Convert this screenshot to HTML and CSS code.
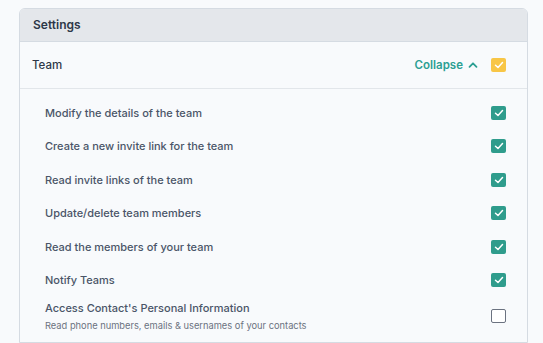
FILE: index.html
```html
<!DOCTYPE html>
<html lang="en">
<head>
    <meta charset="UTF-8">
    <meta name="viewport" content="width=device-width, initial-scale=1.0">
    <title>Settings</title>
    <link rel="stylesheet" href="styles.css">
</head>
<body>
    <div class="card">
        <div class="card-header">Settings</div>

        <div class="section-row">
            <span class="section-title">Team</span>
            <div class="section-actions">
                <span class="collapse">Collapse
                    <svg width="10" height="10" viewBox="0 0 10 10"><path d="M1.5 6.8 L5 3.3 L8.5 6.8" fill="none" stroke="currentColor" stroke-width="1.8" stroke-linecap="round" stroke-linejoin="round"/></svg>
                </span>
                <span class="check check-yellow">
                    <svg viewBox="0 0 14 14"><path d="M3.5 7.2 L6 9.5 L10.5 4.6" fill="none" stroke="#fff" stroke-width="1.5" stroke-linecap="round" stroke-linejoin="round"/></svg>
                </span>
            </div>
        </div>

        <ul class="perm-list">
            <li class="perm">
                <span class="perm-title">Modify the details of the team</span>
                <span class="check check-teal"><svg viewBox="0 0 14 14"><path d="M3.5 7.2 L6 9.5 L10.5 4.6" fill="none" stroke="#fff" stroke-width="1.5" stroke-linecap="round" stroke-linejoin="round"/></svg></span>
            </li>
            <li class="perm">
                <span class="perm-title">Create a new invite link for the team</span>
                <span class="check check-teal"><svg viewBox="0 0 14 14"><path d="M3.5 7.2 L6 9.5 L10.5 4.6" fill="none" stroke="#fff" stroke-width="1.5" stroke-linecap="round" stroke-linejoin="round"/></svg></span>
            </li>
            <li class="perm">
                <span class="perm-title">Read invite links of the team</span>
                <span class="check check-teal"><svg viewBox="0 0 14 14"><path d="M3.5 7.2 L6 9.5 L10.5 4.6" fill="none" stroke="#fff" stroke-width="1.5" stroke-linecap="round" stroke-linejoin="round"/></svg></span>
            </li>
            <li class="perm">
                <span class="perm-title">Update/delete team members</span>
                <span class="check check-teal"><svg viewBox="0 0 14 14"><path d="M3.5 7.2 L6 9.5 L10.5 4.6" fill="none" stroke="#fff" stroke-width="1.5" stroke-linecap="round" stroke-linejoin="round"/></svg></span>
            </li>
            <li class="perm">
                <span class="perm-title">Read the members of your team</span>
                <span class="check check-teal"><svg viewBox="0 0 14 14"><path d="M3.5 7.2 L6 9.5 L10.5 4.6" fill="none" stroke="#fff" stroke-width="1.5" stroke-linecap="round" stroke-linejoin="round"/></svg></span>
            </li>
            <li class="perm">
                <span class="perm-title">Notify Teams</span>
                <span class="check check-teal"><svg viewBox="0 0 14 14"><path d="M3.5 7.2 L6 9.5 L10.5 4.6" fill="none" stroke="#fff" stroke-width="1.5" stroke-linecap="round" stroke-linejoin="round"/></svg></span>
            </li>
            <li class="perm perm-detailed">
                <div>
                    <div class="perm-title">Access Contact's Personal Information</div>
                    <div class="perm-desc">Read phone numbers, emails &amp; usernames of your contacts</div>
                </div>
                <span class="check check-empty"></span>
            </li>
        </ul>
    </div>
</body>
</html>
```

FILE: styles.css
```css
* {
    margin: 0;
    padding: 0;
    box-sizing: border-box;
}
body {
    font-family: 'Inter', 'Liberation Sans', sans-serif;
    background-color: #f8fafc;
    padding: 8px 16px 0 19px;
    color: #4a5568;
}
.card {
    width: 509px;
    border: 1px solid #d5dbe2;
    border-radius: 6px 6px 0 0;
    background-color: #f8fafc;
}
.card-header {
    height: 33px;
    display: flex;
    align-items: center;
    padding: 0 13px 1px;
    background-color: #e4e7eb;
    border-bottom: 1px solid #d5dbe2;
    border-radius: 5px 5px 0 0;
    font-size: 12px;
    font-weight: 600;
    color: #2d3748;
}
.section-row {
    height: 47px;
    display: flex;
    align-items: center;
    justify-content: space-between;
    padding: 0 21px 0 12px;
    border-bottom: 1px solid #e2e6ea;
}
.section-title {
    font-size: 11.5px;
    font-weight: 500;
    color: #2d3748;
}
.section-actions {
    display: flex;
    align-items: center;
    gap: 13px;
}
.collapse {
    display: flex;
    align-items: center;
    gap: 5px;
    font-size: 11.5px;
    font-weight: 600;
    color: #2c9f93;
}
.check {
    width: 15px;
    height: 14px;
    border-radius: 2px;
    display: flex;
    align-items: center;
    justify-content: center;
    flex-shrink: 0;
}
.check svg {
    width: 14px;
    height: 14px;
}
.check-yellow {
    background-color: #f8c646;
}
.check-teal {
    background-color: #2f9c8c;
}
.check-empty {
    border: 1.5px solid #6b7280;
    background-color: #fff;
}
.perm-list {
    list-style: none;
    padding: 7px 21px 7px 25px;
}
.perm {
    height: 33.5px;
    display: flex;
    align-items: center;
    justify-content: space-between;
}
.perm-title {
    font-size: 11px;
    font-weight: 500;
    color: #4a5568;
}
.perm-detailed {
    height: 38px;
}
.perm-desc {
    margin-top: 5px;
    font-size: 9.3px;
    color: #6b7280;
}
```
